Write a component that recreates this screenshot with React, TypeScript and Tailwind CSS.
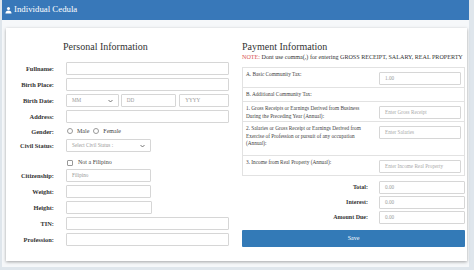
export default function App() {
  const serif = "font-['Liberation_Serif','Times_New_Roman',serif]";
  const label = 'w-[48px] shrink-0 text-right text-[6.4px] font-bold text-[#333] leading-[7px]';
  const input =
    'h-[13px] border border-[#d6d6d6] rounded-[1px] bg-white px-[5px] text-[5.2px] text-[#999] flex items-center';

  const Chevron = () => (
    <svg width="5" height="4" viewBox="0 0 10 6" className="ml-auto">
      <path d="M1 1l4 4 4-4" fill="none" stroke="#555" strokeWidth="1.6" />
    </svg>
  );

  const tableRows = [
    { text: ['A. Basic Community Tax:'], input: { value: '1.00', gray: true }, h: 'h-[20px]' },
    { text: ['B. Additional Community Tax:'], input: null, h: 'h-[14px]' },
    {
      text: ['1. Gross Receipts or Earnings Derived from Business', 'During the Preceding Year (Annual):'],
      input: { value: 'Enter Gross Receipt', gray: false },
      h: 'h-[20px]',
    },
    {
      text: [
        '2. Salaries or Gross Receipt or Earnings Derived from',
        'Exercise of Profession or pursuit of any occupation',
        '(Annual):',
      ],
      input: { value: 'Enter Salaries', gray: false },
      h: 'h-[34px]',
    },
    {
      text: ['3. Income from Real Property (Annual):'],
      input: { value: 'Enter Income Real Property', gray: false },
      h: 'h-[20px]',
    },
  ];

  const totals = ['Total:', 'Interest:', 'Amount Due:'];

  return (
    <div className={`${serif} h-[270px] w-full overflow-hidden bg-[#dfe6ec] pl-[2px] pr-[5px] pb-[3px]`}>
      <div className="flex h-full flex-col bg-[#f6f8fa]">
        {/* panel heading */}
        <div className="flex h-[20px] shrink-0 items-center gap-[2px] bg-[#3878b9] px-[3px] text-[8.8px] text-white">
          <svg width="7" height="8" viewBox="0 0 16 16" fill="white">
            <circle cx="8" cy="4.5" r="3.5" />
            <path d="M1 16c0-4.5 3-7 7-7s7 2.5 7 7z" />
          </svg>
          <span>Individual Cedula</span>
        </div>

        <div className="pl-[4px] pr-[2px] pt-[8px]">
          <div className="flex h-[233px] bg-white shadow-[0_1px_3px_rgba(0,0,0,0.35)]">
            {/* Personal Information */}
            <div className="w-[236px] shrink-0">
              <div className="mt-[13px] h-[12px] pl-[57px] text-[10px] leading-[12px] text-[#333]">
                Personal Information
              </div>

              <div className="mt-[9px] flex items-center gap-[12px]">
                <div className={label}>Fullname:</div>
                <div className={`${input} w-[163px]`} />
              </div>
              <div className="mt-[3px] flex items-center gap-[12px]">
                <div className={label}>Birth Place:</div>
                <div className={`${input} w-[163px]`} />
              </div>
              <div className="mt-[3px] flex items-center gap-[12px]">
                <div className={label}>Birth Date:</div>
                <div className="flex w-[163px] gap-[2px]">
                  <div className={`${input} w-[53px] text-[#777]`}>
                    MM
                    <Chevron />
                  </div>
                  <div className={`${input} w-[56px]`}>DD</div>
                  <div className={`${input} ml-[1px] w-[50px]`}>YYYY</div>
                </div>
              </div>
              <div className="mt-[3px] flex items-center gap-[12px]">
                <div className={label}>Address:</div>
                <div className={`${input} w-[163px]`} />
              </div>
              <div className="mt-[3px] flex h-[10px] items-center gap-[12px]">
                <div className={label}>Gender:</div>
                <div className="flex items-center text-[6px] text-[#444]">
                  <span className="ml-[1px] h-[6px] w-[6px] rounded-full border border-[#999] bg-white" />
                  <span className="ml-[4px]">Male</span>
                  <span className="ml-[4px] h-[6px] w-[6px] rounded-full border border-[#999] bg-white" />
                  <span className="ml-[4px]">Female</span>
                </div>
              </div>
              <div className="mt-[3px] flex items-center gap-[12px]">
                <div className={label}>Civil Status:</div>
                <div className={`${input} w-[85px] text-[#777]`}>
                  Select Civil Status :
                  <Chevron />
                </div>
              </div>
              <div className="mt-[6px] flex h-[9px] items-center gap-[12px]">
                <div className={label} />
                <div className="flex items-center text-[6px] text-[#444]">
                  <span className="ml-[1px] h-[6px] w-[6px] rounded-[1px] border border-[#999] bg-white" />
                  <span className="ml-[5px]">Not a Filipino</span>
                </div>
              </div>
              <div className="mt-[2px] flex items-center gap-[12px]">
                <div className={label}>Citizenship:</div>
                <div className={`${input} w-[85px] bg-[#eeeeee] text-[#888]`}>Filipino</div>
              </div>
              <div className="mt-[3px] flex items-center gap-[12px]">
                <div className={label}>Weight:</div>
                <div className={`${input} w-[85px]`} />
              </div>
              <div className="mt-[3px] flex items-center gap-[12px]">
                <div className={label}>Height:</div>
                <div className={`${input} w-[86px]`} />
              </div>
              <div className="mt-[3px] flex items-center gap-[12px]">
                <div className={label}>TIN:</div>
                <div className={`${input} w-[163px]`} />
              </div>
              <div className="mt-[3px] flex items-center gap-[12px]">
                <div className={label}>Profession:</div>
                <div className={`${input} w-[163px]`} />
              </div>
            </div>

            {/* Payment Information */}
            <div className="w-[223px] shrink-0">
              <div className="mt-[13px] h-[12px] text-[10px] leading-[12px] text-[#333]">Payment Information</div>
              <div className="mt-[1px] whitespace-nowrap text-[6.1px] leading-[7px] text-[#333]">
                <span className="text-[#d9534f]">NOTE:</span> Dont use comma(,) for entering GROSS RECEIPT, SALARY,
                REAL PROPERTY
              </div>

              <div className="mt-[6px] border-t border-l border-r border-[#e2e2e2]">
                {tableRows.map((row, i) => (
                  <div key={i} className={`flex ${row.h} border-b border-[#e2e2e2]`}>
                    <div className="w-[136px] shrink-0 pl-[3px] pt-[3px] text-[5.3px] leading-[7.5px] text-[#444]">
                      {row.text.map((t, j) => (
                        <div key={j} className="whitespace-nowrap">
                          {t}
                        </div>
                      ))}
                    </div>
                    {row.input && (
                      <div className="pt-[4px]">
                        <div
                          className={`${input} h-[12px] w-[82px] text-[4.6px] ${row.input.gray ? 'bg-[#eeeeee] text-[#888]' : 'text-[#aaa]'}`}
                        >
                          {row.input.value}
                        </div>
                      </div>
                    )}
                  </div>
                ))}
              </div>

              <div className="mt-[5px] flex flex-col gap-[2px]">
                {totals.map((t) => (
                  <div key={t} className="flex items-center">
                    <div className="w-[126px] text-right text-[6px] font-bold text-[#333]">{t}</div>
                    <div className={`${input} ml-[11px] h-[12.5px] w-[86px] bg-[#eeeeee] text-[4.6px] text-[#999]`}>
                      0.00
                    </div>
                  </div>
                ))}
              </div>

              <div className="mt-[6px] flex h-[17px] items-center justify-center rounded-[1px] bg-[#337ab7] text-[6px] text-white">
                Save
              </div>
            </div>
          </div>
        </div>
      </div>
    </div>
  );
}
